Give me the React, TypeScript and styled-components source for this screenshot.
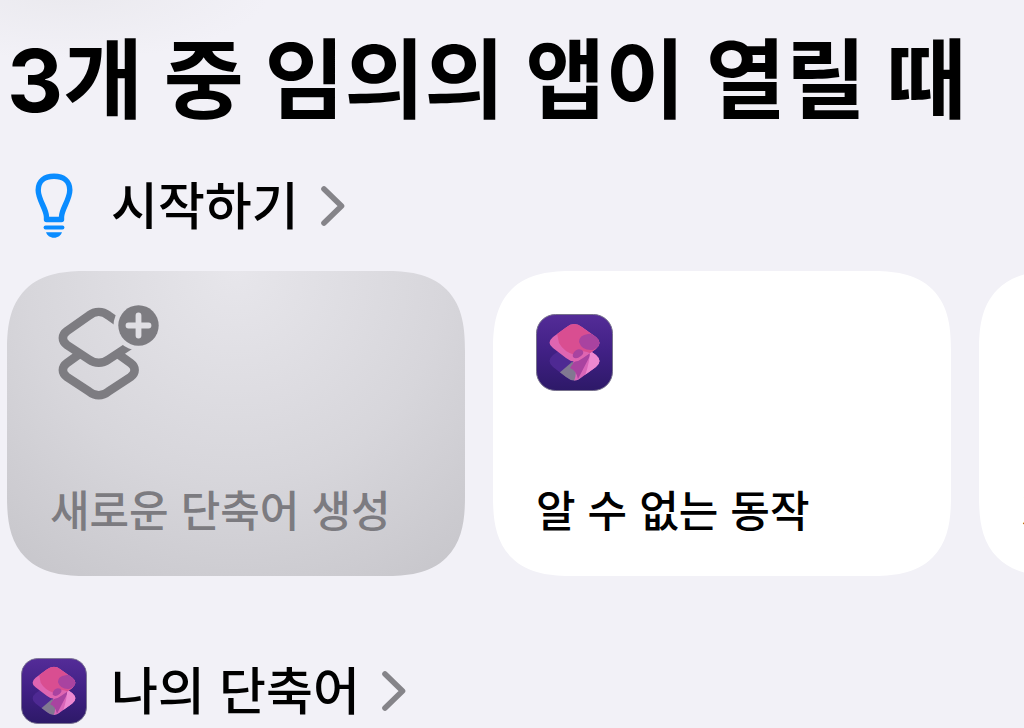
import React, { useId } from "react";
import styled, { createGlobalStyle, css } from "styled-components";

const GlobalStyle = createGlobalStyle`
  *, *::before, *::after { box-sizing: border-box; }
  body {
    margin: 0;
    background: #f2f1f7;
    color: #000;
    font-family: "Noto Sans CJK KR", sans-serif;
    overflow: hidden;
  }
`;

const Page = styled.main`
  display: flex;
  flex-direction: column;
  min-height: 100vh;
  padding: 17px 0 0 7px;
  background: radial-gradient(ellipse 200px 70px at 70px -10px, #eae9ee, #f2f1f7);
`;

const Title = styled.h1`
  margin: 0;
  font-family: Inter, "Noto Sans CJK KR", sans-serif;
  font-size: 87px;
  line-height: 128px;
  font-weight: 700;
  white-space: nowrap;
`;

const SectionLink = styled.a<{ $spaced?: boolean }>`
  display: flex;
  align-items: center;
  height: 80px;
  margin-top: ${(p) => (p.$spaced ? 75 : 21)}px;
  color: inherit;
  text-decoration: none;
`;

const SectionIcon = styled.span`
  display: flex;
  justify-content: center;
  width: 94px;
  margin-right: 10px;
`;

const SectionTitle = styled.h2`
  margin: 0 22px 0 0;
  padding-bottom: 6px;
  font-size: 51px;
  line-height: 74px;
  font-weight: 500;
  white-space: nowrap;
`;

const CardRow = styled.div`
  display: flex;
  gap: 28px;
  margin-top: 25px;
  overflow: hidden;
`;

const Card = styled.button<{ $muted?: boolean }>`
  display: flex;
  flex: 0 0 458px;
  flex-direction: column;
  justify-content: space-between;
  align-items: flex-start;
  height: 305px;
  padding: 32px 42px 36px 43px;
  border: 0;
  border-radius: 80px;
  corner-shape: superellipse(1.4);
  background: #fff;
  color: #000;
  font: inherit;
  ${(p) =>
    p.$muted &&
    css`
      color: #7c7b80;
      background: radial-gradient(circle at 50% 0, #e7e6eb 0, #d7d6db 55%, #c6c5ca 100%);
    `}
`;

const CardLabel = styled.span`
  font-size: 43px;
  line-height: 64px;
  font-weight: 500;
  white-space: nowrap;
`;

const AppIconSvg = styled.svg`
  display: block;
  flex: none;
  margin-top: 11px;
`;

const SectionSvg = styled.svg`
  display: block;
`;

function Bulb() {
  return (
    <SectionSvg width="40" height="66" viewBox="0 0 40 66" aria-hidden="true">
      <path
        d="M12.500 46.500V44C12.500 36 4.200 27 4.200 17C4.200 8 10.500 3.200 20 3.200S35.800 8 35.800 17C35.800 27 27.500 36 27.500 44V46.500z"
        fill="none"
        stroke="#0a8cff"
        strokeWidth="5.400"
        strokeLinejoin="round"
      />
      <path d="M11.500 54.500h17" stroke="#0a8cff" strokeWidth="3.800" strokeLinecap="round" />
      <path d="M12 59.200h16c-1 3-4 5.500-8 5.500s-7-2.500-8-5.500z" fill="#0a8cff" />
    </SectionSvg>
  );
}

function Chevron() {
  return (
    <svg width="24" height="40" viewBox="0 0 24 40" aria-hidden="true">
      <path
        d="M3 3l17.500 17L3 37"
        fill="none"
        stroke="#858489"
        strokeWidth="5.600"
        strokeLinecap="round"
        strokeLinejoin="round"
      />
    </svg>
  );
}

function NewShortcut() {
  const id = useId();
  return (
    <svg width="110" height="100" viewBox="50 303 110 100" aria-hidden="true">
      <mask id={id} maskUnits="userSpaceOnUse" x="50" y="303" width="110" height="100">
        <rect x="50" y="303" width="110" height="100" fill="#fff" />
        <circle cx="138.500" cy="325.500" r="25" fill="#000" />
      </mask>
      <g fill="none" stroke="#7d7c81" strokeWidth="8.600">
        <path d="M79.500 354L67 363C61.500 367 61.500 373 67 377L89 391.500C95 396.500 102.500 396.500 108.500 391.500L130.500 377C136 373 136 367 130.500 363L118 354" />
        <path
          mask={`url(#${id})`}
          d="M67 331C61.500 335 61.500 341 67 345L89 359.500C95 363.700 102.500 363.700 108.500 359.500L130.500 345C136 341 136 335 130.500 331L108.500 315.500C102.500 310.800 95 310.800 89 315.500z"
        />
      </g>
      <circle cx="138.500" cy="325.500" r="20.200" fill="#7d7c81" />
      <path d="M128.500 325.500h20M138.500 315.500v20" stroke="#e0dfe4" strokeWidth="5.800" strokeLinecap="round" />
    </svg>
  );
}

function ShortcutsIcon({ size, as: As = "svg" }: { size: number; as?: any }) {
  const id = useId();
  return (
    <As width={size} height={size} viewBox="0 0 77 77" aria-hidden="true">
      <defs>
        <linearGradient id={id + "bg"} x2="0" y2="1">
          <stop offset="0" stopColor="#542c98" />
          <stop offset=".5" stopColor="#402084" />
          <stop offset="1" stopColor="#2d1968" />
        </linearGradient>
        <clipPath id={id + "top"}>
          <path d="M30 13.500Q38 7 46 13L60 23Q67 29 60 35L47 44Q38.500 51 30 44L17 34Q10 29 17 23z" />
        </clipPath>
        <clipPath id={id + "low"}>
          <path d="M30 32Q38 25 46 31L60 41Q67 47 60 53L46 63Q38.500 70 30 63L17 53Q10 47 17 41z" />
        </clipPath>
      </defs>
      <rect x=".5" y=".5" width="76" height="76" rx="19" fill={`url(#${id}bg)`} stroke="#77718c" />
      <g clipPath={`url(#${id}low)`}>
        <path d="M10 25h58v45H10z" fill="#4e2993" />
        <path d="M22 60l14-12 12 4-4 18-20-3z" fill="#817891" />
        <path d="M37 48l18-22 12 20-23 23-6-2q4-9-1-19z" fill="#d966b9" />
        <path d="M38 48l18-10-14 27q-2-9-8-11z" fill="#a943a0" />
        <path d="M54 36l12 8v8L49 62q5-15 5-26z" fill="#ed88d0" />
      </g>
      <g clipPath={`url(#${id}top)`}>
        <path d="M10 7h58v43H10z" fill="#df65b1" />
        <path d="M21 19L38 7l27 20-9 13q-11-6-17 1-11-3-16-12z" fill="#d94e91" />
        <path d="M52 20q-9 1-9 8 3 9 14 8l10-6-7-9q-4-2-8-1z" fill="#a943a0" />
      </g>
      <path d="M39 37q3-3 7-1 3 3-1 6-5 4-8 1-1-3 2-6z" fill="#a943a0" />
    </As>
  );
}

export default function App() {
  return (
    <>
      <GlobalStyle />
      <Page lang="ko">
        <Title>3개 중 임의의 앱이 열릴 때</Title>
        <SectionLink href="#start">
          <SectionIcon>
            <Bulb />
          </SectionIcon>
          <SectionTitle>시작하기</SectionTitle>
          <Chevron />
        </SectionLink>
        <CardRow>
          <Card type="button" $muted>
            <NewShortcut />
            <CardLabel>새로운 단축어 생성</CardLabel>
          </Card>
          <Card type="button">
            <ShortcutsIcon size={77} as={AppIconSvg} />
            <CardLabel>알 수 없는 동작</CardLabel>
          </Card>
          <Card type="button">
            <span />
            <CardLabel>3</CardLabel>
          </Card>
        </CardRow>
        <SectionLink href="#mine" $spaced>
          <SectionIcon>
            <ShortcutsIcon size={66} as={SectionSvg} />
          </SectionIcon>
          <SectionTitle>나의 단축어</SectionTitle>
          <Chevron />
        </SectionLink>
      </Page>
    </>
  );
}
